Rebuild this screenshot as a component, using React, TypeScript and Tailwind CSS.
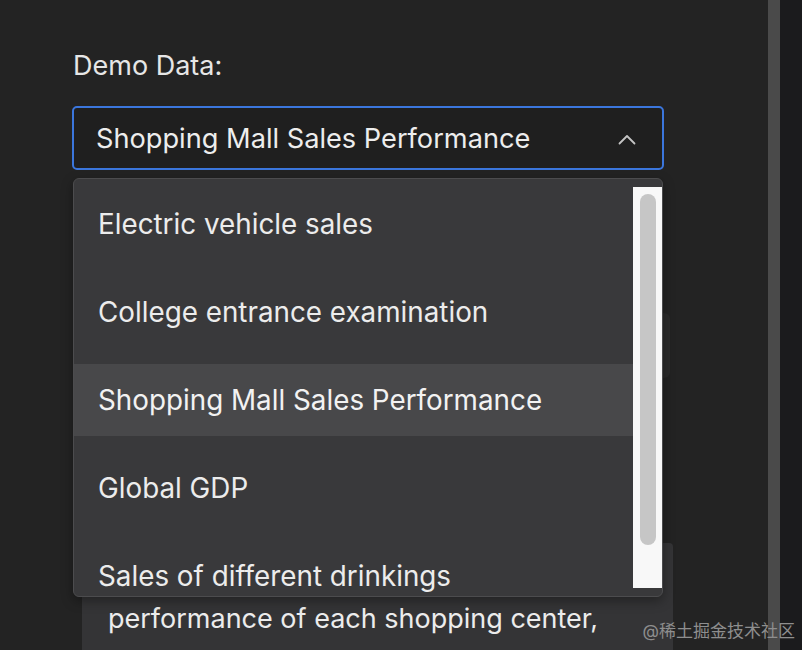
import * as React from "react";

const OPTIONS = [
  "Electric vehicle sales",
  "College entrance examination",
  "Shopping Mall Sales Performance",
  "Global GDP",
  "Sales of different drinkings",
];

const SELECTED = "Shopping Mall Sales Performance";

function ChevronUp() {
  return (
    <svg width="18" height="11" viewBox="0 0 18 11" fill="none" className="shrink-0">
      <path d="M1.5 9.5 9 2l7.5 7.5" stroke="#c4c4c4" strokeWidth="1.8" strokeLinecap="round" strokeLinejoin="round" />
    </svg>
  );
}

function DropdownList() {
  return (
    <div className="absolute left-px top-[72px] z-10 flex h-[419px] w-[590px] overflow-hidden rounded-[6px] border border-[#4c4c4e] bg-[#39393b] shadow-[0_4px_12px_rgba(0,0,0,0.35)]">
      <div className="flex flex-1 flex-col gap-4 pt-[9px]">
        {OPTIONS.map((option) => {
          const selected = option === SELECTED;
          return (
            <div
              key={option}
              className={
                selected
                  ? "flex h-[72px] shrink-0 items-center bg-[#48484a] pl-[24px] pt-[2px] text-[27.8px] text-[#f2f2f2]"
                  : "flex h-[72px] shrink-0 items-center pl-[24px] pt-[2px] text-[27.8px] text-[#ececec]"
              }
            >
              {option}
            </div>
          );
        })}
      </div>
      <div className="mt-[8px] mb-[8px] flex w-[29px] shrink-0 justify-center bg-[#f8f8f8] pt-[7px]">
        <div className="h-[351px] w-[16px] rounded-full bg-[#c6c6c6]" />
      </div>
    </div>
  );
}

export default function App() {
  return (
    <div
      className="relative flex h-[650px] w-[802px] overflow-hidden bg-[#232323]"
      style={{ fontFamily: "Inter, 'Noto Sans', 'Noto Sans CJK SC', sans-serif" }}
    >
      <div className="flex flex-1 flex-col pl-[72px] pt-[52px]">
        <div className="pl-px text-[27px] leading-[28px] text-[#e6e6e6]">Demo Data:</div>

        <div className="relative mt-[26px] w-[592px]">
          <div className="flex h-[64px] items-center justify-between rounded-[5px] border-2 border-[#3b76dc] bg-[#1f1f1f] pl-[22px] pr-[26px] pt-[2px]">
            <span className="text-[27.2px] text-[#ededed]">{SELECTED}</span>
            <ChevronUp />
          </div>

          <DropdownList />

          <div className="mt-[143px] ml-[10px] h-[65px] w-[588px] rounded-[6px] bg-[#2a2a2a]" />

          <div className="mt-[165px] ml-[10px] w-[591px] rounded-t-[4px] bg-[#343436] pl-[26px] pt-[58px] pb-[20px] text-[27px] leading-[36px] text-[#ececec]">
            performance of each shopping center,
          </div>
        </div>
      </div>

      <div className="w-[12px] shrink-0 bg-[#4a4a4a]" />
      <div className="w-[22px] shrink-0 bg-[#1b1b1d]" />

      <div className="absolute bottom-[6px] right-[7px] text-[17px] text-[#8e8e8e]">@稀土掘金技术社区</div>
    </div>
  );
}
